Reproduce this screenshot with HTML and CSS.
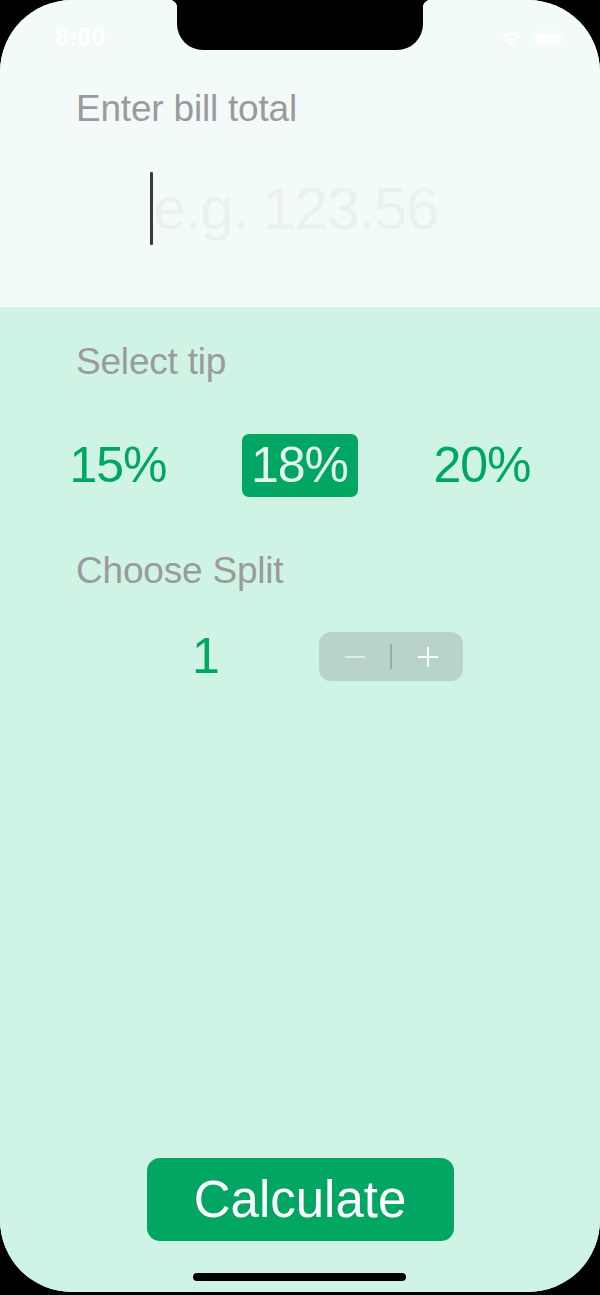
FILE: index.html
```html
<!DOCTYPE html>
<html lang="en">
<head>
<meta charset="utf-8">
<title>Tip Calculator</title>
<link rel="stylesheet" href="styles.css">
</head>
<body>
<div class="phone">
  <div class="notch"></div>
  <section class="top">
    <div class="status">
      <span class="time">8:00</span>
      <div class="status-icons">
        <svg class="wifi" width="24" height="17" viewBox="0 0 24 17">
          <path d="M12 16.5 L8.6 12.9 A5 5 0 0 1 15.4 12.9 Z" fill="#fff"/>
          <path d="M5.6 9.9 A9.2 9.2 0 0 1 18.4 9.9 L16.6 11.8 A6.6 6.6 0 0 0 7.4 11.8 Z" fill="#fff"/>
          <path d="M2.4 6.6 A13.8 13.8 0 0 1 21.6 6.6 L19.8 8.5 A11.2 11.2 0 0 0 4.2 8.5 Z" fill="#fff"/>
        </svg>
        <svg class="battery" width="33" height="15" viewBox="0 0 33 15">
          <rect x="0.8" y="0.8" width="28" height="13.4" rx="4" fill="none" stroke="#fff" stroke-opacity="0.6" stroke-width="1.3"/>
          <rect x="2.8" y="2.8" width="24" height="9.4" rx="2.3" fill="#fff"/>
          <path d="M30.6 5 a2 2.5 0 0 1 0 5 Z" fill="#fff" fill-opacity="0.6"/>
        </svg>
      </div>
    </div>
    <div class="label">Enter bill total</div>
    <div class="bill-field">
      <span class="caret"></span>
      <span class="placeholder">e.g. 123.56</span>
    </div>
  </section>
  <section class="bottom">
    <div class="label">Select tip</div>
    <div class="tips">
      <div class="tip">15%</div>
      <div class="tip"><span class="tip-selected">18%</span></div>
      <div class="tip">20%</div>
    </div>
    <div class="label split-label">Choose Split</div>
    <div class="split-row">
      <div class="split-value">1</div>
      <div class="stepper">
        <div class="step-btn"><span class="minus"></span></div>
        <span class="step-sep"></span>
        <div class="step-btn"><span class="plus"></span></div>
      </div>
    </div>
    <button class="calc">Calculate</button>
  </section>
  <div class="home-indicator"></div>
</div>
</body>
</html>
```
FILE: styles.css
```css
* { box-sizing: border-box; }
html, body {
  margin: 0;
  padding: 0;
  background: #000;
}
body {
  width: 600px;
  height: 1295px;
  overflow: hidden;
  font-family: "Liberation Sans", Arial, sans-serif;
}
.phone {
  position: relative;
  width: 600px;
  height: 1292px;
  border-radius: 72px;
  overflow: hidden;
  display: flex;
  flex-direction: column;
  background: #cff4e5;
}
.notch {
  position: absolute;
  top: 0;
  left: 177px;
  width: 246px;
  height: 50px;
  background: #000;
  border-radius: 0 0 26px 26px;
  z-index: 5;
}
.notch::before,
.notch::after {
  content: "";
  position: absolute;
  top: 0;
  width: 8px;
  height: 8px;
}
.notch::before {
  left: -8px;
  background: radial-gradient(circle at 0 100%, transparent 8px, #000 8.6px);
}
.notch::after {
  right: -8px;
  background: radial-gradient(circle at 100% 100%, transparent 8px, #000 8.6px);
}
.top {
  height: 307px;
  background: #f3fafa;
  display: flex;
  flex-direction: column;
}
.status {
  display: flex;
  justify-content: space-between;
  align-items: center;
  padding: 25px 34px 0 55px;
  height: 50px;
}
.time {
  color: #fff;
  font-weight: bold;
  font-size: 25px;
  line-height: 25px;
}
.status-icons {
  display: flex;
  align-items: center;
  gap: 10px;
  margin-top: 2px;
}
.label {
  color: #9b9b9b;
  font-size: 37px;
  line-height: 37px;
  padding-left: 76px;
  letter-spacing: -0.2px;
}
.top .label {
  margin-top: 40px;
}
.bill-field {
  margin-top: 45px;
  height: 73px;
  display: flex;
  align-items: center;
  padding-left: 150px;
}
.caret {
  width: 3px;
  height: 73px;
  background: #3a3a3a;
  border-radius: 1px;
}
.placeholder {
  color: #ebf1f1;
  font-size: 60px;
  line-height: 73px;
  letter-spacing: -1.4px;
}
.bottom {
  flex: 1;
  display: flex;
  flex-direction: column;
  padding-top: 36px;
  padding-bottom: 51px;
  background: #cff4e5;
}
.tips {
  margin-top: 54px;
  display: grid;
  grid-template-columns: repeat(3, 1fr);
  padding: 0 27px;
}
.tip {
  display: flex;
  justify-content: center;
  color: #00a662;
  font-size: 50px;
  line-height: 63px;
  height: 63px;
  letter-spacing: -1px;
}
.tip-selected {
  display: block;
  background: #00a662;
  color: #e2f7ed;
  border-radius: 7px;
  padding: 0 9px 0 8px;
  width: 116px;
  text-align: center;
}
.split-label {
  margin-top: 55px;
}
.split-row {
  margin-top: 43px;
  display: flex;
  align-items: center;
  height: 49px;
  padding-left: 192px;
}
.split-value {
  width: 127px;
  color: #00a662;
  font-size: 50px;
  line-height: 49px;
}
.stepper {
  width: 144px;
  height: 49px;
  background: #b8d3cb;
  border-radius: 12px;
  display: flex;
  align-items: center;
}
.step-btn {
  flex: 1;
  height: 100%;
  display: flex;
  align-items: center;
  justify-content: center;
  position: relative;
}
.step-sep {
  width: 2px;
  height: 25px;
  background: #98afa8;
}
.minus {
  width: 20px;
  height: 2px;
  background: rgba(255, 255, 255, 0.55);
}
.plus {
  position: relative;
  width: 20px;
  height: 20px;
}
.plus::before,
.plus::after {
  content: "";
  position: absolute;
  background: #fff;
}
.plus::before {
  left: 0;
  top: 9px;
  width: 20px;
  height: 2.4px;
}
.plus::after {
  top: 0;
  left: 9px;
  width: 2.4px;
  height: 20px;
}
.calc {
  margin: auto auto 0;
  width: 307px;
  height: 83px;
  border: 0;
  border-radius: 13px;
  background: #00a662;
  color: #fff;
  font-family: "Liberation Sans", Arial, sans-serif;
  font-size: 51px;
  line-height: 83px;
  padding: 0;
}
.home-indicator {
  position: absolute;
  left: 193px;
  bottom: 11px;
  width: 213px;
  height: 8px;
  border-radius: 4px;
  background: #000;
}
```
